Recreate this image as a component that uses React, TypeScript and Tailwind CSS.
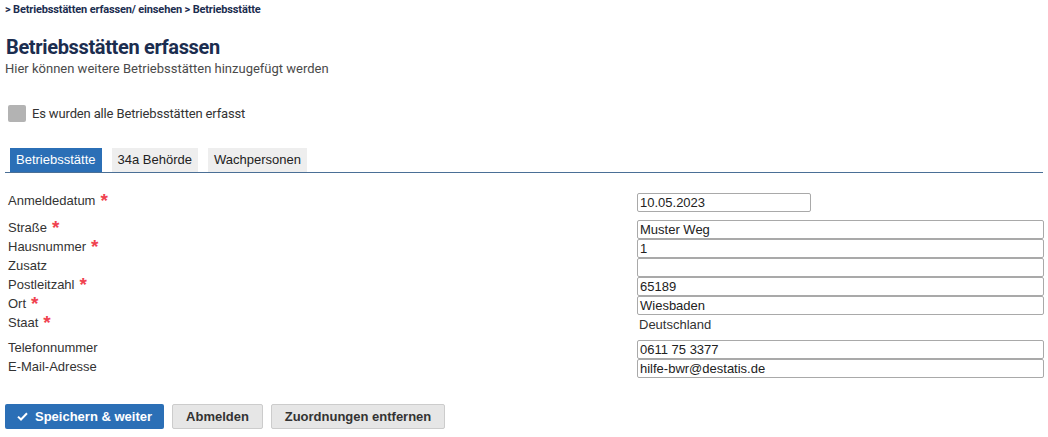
import React from "react";

const head = { fontFamily: "Roboto, 'Noto Sans', sans-serif" };
const body = { fontFamily: "'Liberation Sans', Arial, sans-serif" };

function Req() {
  return (
    <span className="relative top-[2px] ml-[5px] text-[19px] font-bold leading-[0px] text-[#f0424f]">
      *
    </span>
  );
}

type Row = { label: string; req?: boolean; value?: string; input?: boolean; short?: boolean; gapTop?: string };

const rows: Row[] = [
  { label: "Anmeldedatum", req: true, value: "10.05.2023", input: true, short: true },
  { label: "Straße", req: true, value: "Muster Weg", input: true, gapTop: "mt-[8px]" },
  { label: "Hausnummer", req: true, value: "1", input: true },
  { label: "Zusatz", value: "", input: true },
  { label: "Postleitzahl", req: true, value: "65189", input: true },
  { label: "Ort", req: true, value: "Wiesbaden", input: true },
  { label: "Staat", req: true, value: "Deutschland" },
  { label: "Telefonnummer", value: "0611 75 3377", input: true, gapTop: "mt-[6px]" },
  { label: "E-Mail-Adresse", value: "hilfe-bwr@destatis.de", input: true },
];

export default function App() {
  return (
    <div className="w-[1048px] h-[437px] bg-white overflow-hidden" style={body}>
      <div className="pl-[5px] pr-[5px]">
        <div className="pt-[3px] text-[11px] font-bold leading-[13px] tracking-[-0.15px] text-[#1b2d4f]" style={head}>
          &gt; Betriebsstätten erfassen/ einsehen &gt; Betriebsstätte
        </div>
        <h1 className="mt-[19px] ml-[1px] text-[20px] font-bold leading-[24px] tracking-[-0.35px] text-[#1b2d4f]" style={head}>
          Betriebsstätten erfassen
        </h1>
        <p className="mt-[2px] text-[13px] leading-[16px] text-[#4a4a4a]" style={head}>
          Hier können weitere Betriebsstätten hinzugefügt werden
        </p>
        <label className="mt-[28px] ml-[3px] flex items-center gap-[6px]">
          <span className="block w-[18px] h-[17px] rounded-[2px] bg-[#b3b3b3]" />
          <span className="text-[13px] leading-[16px] tracking-[-0.15px] text-[#333]" style={head}>
            Es wurden alle Betriebsstätten erfasst
          </span>
        </label>

        <div className="mt-[26px] flex items-end gap-[10px] border-b border-[#4a6f96] pl-[5px]">
          <div className="h-[24px] px-[6px] flex items-center bg-[#2b6fb6] text-white text-[13px]">Betriebsstätte</div>
          <div className="h-[24px] px-[6px] flex items-center bg-[#eeeeee] text-[#222] text-[13px]">34a Behörde</div>
          <div className="h-[24px] px-[6px] flex items-center bg-[#eeeeee] text-[#222] text-[13px]">Wachpersonen</div>
        </div>

        <div className="mt-[20px] text-[13px] text-[#333]">
          {rows.map((r) => (
            <div key={r.label} className={`grid grid-cols-[632px_1fr] h-[19px] ${r.gapTop ?? ""}`}>
              <div className="pl-[3px] leading-[15px] whitespace-nowrap">
                {r.label}
                {r.req && <Req />}
              </div>
              {r.input ? (
                <div
                  className={`${r.short ? "w-[174px]" : "w-[407px]"} h-[19px] border border-[#a9a9a9] rounded-[2px] px-[2px] leading-[17px] text-[13px] text-[#222] bg-white`}
                >
                  {r.value}
                </div>
              ) : (
                <div className="px-[2px] leading-[19px] text-[#333]">{r.value}</div>
              )}
            </div>
          ))}
        </div>

        <div className="mt-[26px] flex gap-[8px] text-[13px] font-bold">
          <button className="h-[25px] w-[159px] rounded-[2px] bg-[#2b6fb6] text-white flex items-center justify-center gap-[7px]">
            <svg width="11" height="9" viewBox="0 0 11 9" fill="none">
              <path d="M1 4.6 L4 7.5 L10 1.3" stroke="white" strokeWidth="2" />
            </svg>
            Speichern &amp; weiter
          </button>
          <button className="h-[25px] w-[91px] rounded-[2px] bg-[#e6e6e6] border border-[#cccccc] text-[#333]">
            Abmelden
          </button>
          <button className="h-[25px] w-[174px] rounded-[2px] bg-[#e6e6e6] border border-[#cccccc] text-[#333]">
            Zuordnungen entfernen
          </button>
        </div>
      </div>
    </div>
  );
}
